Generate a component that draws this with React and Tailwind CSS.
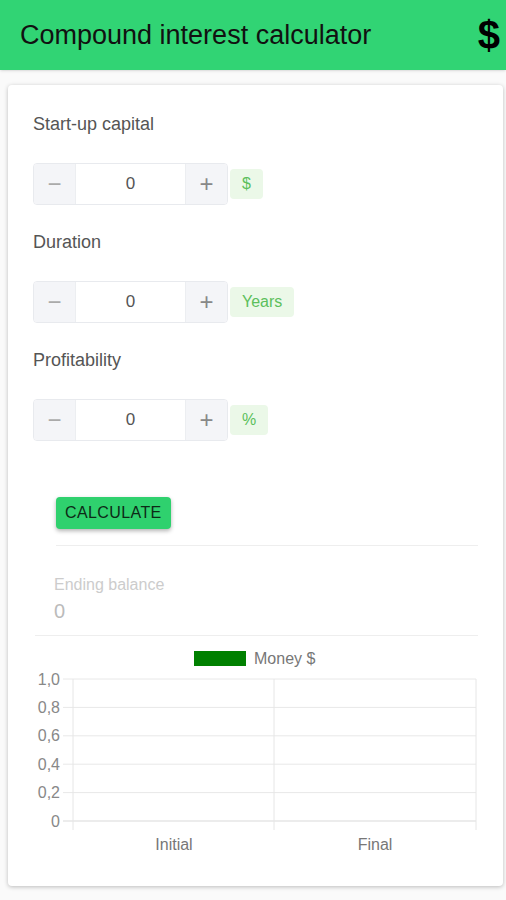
import React, { useState } from "react";

const font = { fontFamily: '"Liberation Sans", Arial, sans-serif' };

const Stepper = ({ label, unit, value, setValue, first }) => (
  <div className={first ? "" : "mt-[25px]"}>
    <div className="text-[18px] leading-6 text-[#555555]">{label}</div>
    <div className="mt-[27px] flex items-center">
      <div className="flex h-[42px] w-[195px] overflow-hidden rounded border border-[#e8eaee]">
        <button
          onClick={() => setValue(value - 1)}
          className="flex w-[42px] items-center justify-center bg-[#f4f5f8] text-[24px] font-light text-[#aaaaaa]"
        >
          −
        </button>
        <input
          value={value}
          onChange={(e) => setValue(Number(e.target.value) || 0)}
          className="w-[111px] border-x border-[#eceef1] bg-white text-center text-[17px] text-[#555555] outline-none"
        />
        <button
          onClick={() => setValue(value + 1)}
          className="flex w-[42px] items-center justify-center bg-[#f4f5f8] text-[24px] font-light text-[#888888]"
        >
          +
        </button>
      </div>
      <span className="ml-[2px] flex h-[30px] items-center rounded bg-[#ebf8e8] px-3 text-[16px] text-[#5cbf5c]">
        {unit}
      </span>
    </div>
  </div>
);

const Chart = () => {
  const grid = [43, 71.4, 99.8, 128.2, 156.6, 185];
  const labels = ["1,0", "0,8", "0,6", "0,4", "0,2", "0"];
  return (
    <svg width="495" height="250" viewBox="0 0 495 250" className="block">
      <rect x="186" y="15" width="52" height="15" fill="#008000" />
      <text x="246" y="28" fontSize="16" fill="#777" style={font}>
        Money $
      </text>
      {grid.map((y, i) => (
        <g key={y}>
          <line x1="55" x2="468" y1={y} y2={y} stroke={i === 5 ? "#d9d9d9" : "#e8e8e8"} strokeWidth="1" />
          <text x="52" y={y + 5.5} fontSize="16" fill="#888" textAnchor="end" style={font}>
            {labels[i]}
          </text>
        </g>
      ))}
      {[65, 266, 468].map((x) => (
        <line key={x} x1={x} x2={x} y1="43" y2="194" stroke="#e6e6e6" strokeWidth="1" />
      ))}
      <text x="166" y="204" fontSize="16" fill="#777" textAnchor="middle" style={font}>
        <tspan dy="0.65em">Initial</tspan>
      </text>
      <text x="367" y="204" fontSize="16" fill="#777" textAnchor="middle" style={font}>
        <tspan dy="0.65em">Final</tspan>
      </text>
    </svg>
  );
};

export default function App() {
  const [capital, setCapital] = useState(0);
  const [years, setYears] = useState(0);
  const [rate, setRate] = useState(0);

  return (
    <div className="min-h-[900px] w-[506px] overflow-hidden bg-[#fafafa]" style={font}>
      <header className="flex h-[70px] items-center justify-between bg-[#31d474] pl-5 pr-[6px] shadow-sm">
        <h1 className="text-[27px] font-normal text-[#111111]">Compound interest calculator</h1>
        <span className="text-[40px] font-bold leading-none text-black">$</span>
      </header>

      <div className="ml-2 mr-[3px] mt-[15px] rounded bg-white pt-[27px] shadow-[0_1px_4px_rgba(0,0,0,0.25)]">
        <div className="px-[25px]">
          <Stepper first label="Start-up capital" unit="$" value={capital} setValue={setCapital} />
          <Stepper label="Duration" unit="Years" value={years} setValue={setYears} />
          <Stepper label="Profitability" unit="%" value={rate} setValue={setRate} />
        </div>

        <div className="ml-12 mr-[25px] mt-[56px]">
          <button className="h-8 rounded bg-[#2fd16e] px-[9px] text-[16px] tracking-wide text-[#0d2a17] shadow-[0_2px_4px_rgba(0,0,0,0.3)]">
            CALCULATE
          </button>
          <div className="mt-4 h-px bg-[#eeeeee]" />
          <div className="ml-[-2px] mt-[31px] text-[16px] leading-4 text-[#cccccc]">Ending balance</div>
          <div className="ml-[-2px] mt-[6px] text-[20px] leading-6 text-[#bbbbbb]">0</div>
        </div>
        <div className="ml-[27px] mr-[25px] mt-[12px] h-px bg-[#eeeeee]" />
        <Chart />
      </div>
    </div>
  );
}
